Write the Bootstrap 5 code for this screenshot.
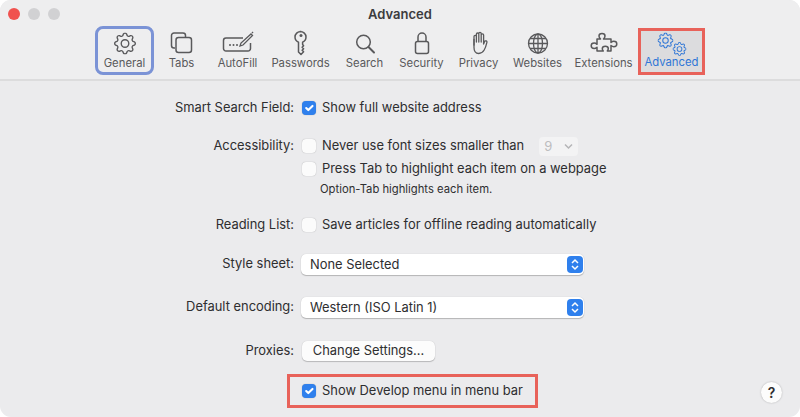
<!DOCTYPE html>
<html lang="en">
  <head>
    <meta charset="utf-8" />
    <meta name="viewport" content="width=device-width, initial-scale=1" />
    <title>Advanced</title>
    <link href="https://cdn.jsdelivr.net/npm/bootstrap@5.3.3/dist/css/bootstrap.min.css" rel="stylesheet" />
    <style>
      html, body { height: 100%; background: #fff; overflow: hidden; }
      body { font-family: Inter, "Liberation Sans", sans-serif; color: #2e2e30; font-size: 12.9px; }
      .win { height: 417px; background: #ebebed; border-radius: 11px; overflow: hidden; }
      .head { height: 81px; background: #eeeeef; border-bottom: 2px solid #dcdcdd; position: relative; }
      .lights { position: absolute; left: 8px; top: 8px; }
      .light { width: 12px; height: 12px; border-radius: 50%; background: #d1d1d3; }
      .light-red { background: #f0524f; }
      .win-title { height: 26px; padding-top: 5px; font-size: 13px; font-weight: 600; color: #3c3c3e; line-height: 18px; text-align: center; }
      .tools { padding-left: 95px; }
      .tool { height: 49px; flex: none; font-size: 11.3px; line-height: 14px; color: #59595b; text-align: center; border-radius: 8px; padding-top: 3px; }
      .tool svg { display: block; margin: 1px auto 0; height: 26px; overflow: visible; }
      .tool span { display: block; white-space: nowrap; }
      .w-general { width: 59px; border: 3px solid #7b93d6; padding-top: 0; }
      .w-tabs { width: 55px; }
      .w-autofill { width: 57px; }
      .w-passwords { width: 69px; }
      .w-search { width: 59px; }
      .w-security { width: 55px; }
      .w-privacy { width: 59px; }
      .w-websites { width: 59px; }
      .w-extensions { width: 73px; }
      .w-advanced { width: 67px; margin: 2px 0 0 -2px; height: 47px; background: #dcdcde; border: 3px solid #e8625a; border-radius: 0; color: #2f76d6; padding-top: 0; }
      .w-advanced svg { height: 23px; }
      .pane { padding-top: 16px; }
      .line { height: 22px; display: flex; align-items: center; }
      .lbl { width: 294px; margin-right: 8px; text-align: right; flex: none; }
      .chk.form-check-input { width: 14px; height: 14px; margin: 0 6px 0 0; flex: none; border: 0; border-radius: 4px; background-color: #fbfbfb; box-shadow: 0 0 1px rgba(0,0,0,.35); }
      .chk.form-check-input:checked { background-color: #2f80ed; }
      .note { height: 18px; padding-left: 320px; font-size: 11.25px; line-height: 18px; }
      .after-16 { margin-bottom: 16px; }
      .after-17 { margin-bottom: 17px; }
      .after-21 { margin-bottom: 21px; }
      .after-22 { margin-bottom: 22px; }
      .after-1 { margin-bottom: 1px; }
      .small-sel { width: 39px; height: 19px; margin-left: 15px; background: #f3f3f4; border-radius: 4px; color: #bdbdbf; padding-left: 5px; line-height: 19px; font-size: 13px; position: relative; }
      .small-sel svg { position: absolute; right: 4px; top: 6px; }
      .sel-wrap { width: 283px; margin-left: -1px; position: relative; }
      .sel-wrap .form-select { height: 21px; padding: 0 0 0 9px; font-size: 12.9px; color: #2e2e30; border: 0; border-radius: 5px; background-image: none; box-shadow: 0 1px 1px rgba(0,0,0,.22), 0 0 1px rgba(0,0,0,.2); line-height: 21px; }
      .stepper { position: absolute; right: 1px; top: 2px; width: 16px; height: 17px; border-radius: 4px; background: #2f80ed; display: flex; align-items: center; justify-content: center; }
      .btn.mac-btn { width: 133px; height: 20px; padding: 0; font-size: 12.9px; line-height: 20px; color: #2e2e30; background: #fcfcfc; border: 0; border-radius: 5px; box-shadow: 0 1px 1px rgba(0,0,0,.2), 0 0 1px rgba(0,0,0,.2); }
      .last-row { margin-top: 12px; align-items: center; }
      .dev-box { width: 251px; height: 34px; margin-left: 287px; padding-left: 12px; border: 3px solid #e8625a; display: flex; align-items: center; }
      .help { width: 21px; height: 21px; margin: 2px 18px 0 auto; padding: 0; border: 0; border-radius: 50%; background: #fcfcfc; font-size: 14px; font-weight: 600; line-height: 21px; text-align: center; color: #2e2e30; box-shadow: 0 0 2px rgba(0,0,0,.25); }
    </style>
  </head>
  <body>
    <svg width="0" height="0" class="position-absolute">
      <symbol id="gear" viewBox="0 0 16 16">
        <path fill="currentColor" d="M8 4.754a3.246 3.246 0 1 0 0 6.492 3.246 3.246 0 0 0 0-6.492zM5.754 8a2.246 2.246 0 1 1 4.492 0 2.246 2.246 0 0 1-4.492 0z"/>
        <path fill="currentColor" d="M9.796 1.343c-.527-1.79-3.065-1.79-3.592 0l-.094.319a.873.873 0 0 1-1.255.52l-.292-.16c-1.64-.892-3.433.902-2.54 2.541l.159.292a.873.873 0 0 1-.52 1.255l-.319.094c-1.79.527-1.79 3.065 0 3.592l.319.094a.873.873 0 0 1 .52 1.255l-.16.292c-.892 1.64.901 3.434 2.541 2.54l.292-.159a.873.873 0 0 1 1.255.52l.094.319c.527 1.79 3.065 1.79 3.592 0l.094-.319a.873.873 0 0 1 1.255-.52l.292.16c1.64.893 3.434-.902 2.54-2.541l-.159-.292a.873.873 0 0 1 .52-1.255l.319-.094c1.79-.527 1.79-3.065 0-3.592l-.319-.094a.873.873 0 0 1-.52-1.255l.16-.292c.893-1.64-.902-3.433-2.541-2.54l-.292.159a.873.873 0 0 1-1.255-.52l-.094-.319zm-2.633.283c.246-.835 1.428-.835 1.674 0l.094.319a1.873 1.873 0 0 0 2.693 1.115l.291-.16c.764-.415 1.6.42 1.184 1.185l-.159.292a1.873 1.873 0 0 0 1.116 2.692l.318.094c.835.246.835 1.428 0 1.674l-.319.094a1.873 1.873 0 0 0-1.115 2.693l.16.291c.415.764-.42 1.6-1.185 1.184l-.291-.159a1.873 1.873 0 0 0-2.693 1.116l-.094.318c-.246.835-1.428.835-1.674 0l-.094-.319a1.873 1.873 0 0 0-2.692-1.115l-.292.16c-.764.415-1.6-.42-1.184-1.185l.159-.291A1.873 1.873 0 0 0 1.945 8.93l-.319-.094c-.835-.246-.835-1.428 0-1.674l.319-.094A1.873 1.873 0 0 0 3.06 4.377l-.16-.292c-.415-.764.42-1.6 1.185-1.184l.292.159a1.873 1.873 0 0 0 2.692-1.115l.094-.319z"/>
      </symbol>
    </svg>
    <div class="win">
      <div class="head">
        <div class="lights d-flex gap-2">
          <div class="light light-red"></div>
          <div class="light"></div>
          <div class="light"></div>
        </div>
        <div class="win-title">Advanced</div>
        <div class="tools d-flex">
          <div class="tool w-general">
            <svg width="26" height="26" viewBox="0 0 26 26"><use href="#gear" x="2" y="2.500" width="22" height="22"/></svg>
            <span>General</span>
          </div>
          <div class="tool w-tabs">
            <svg width="26" height="26" viewBox="0 0 26 26" fill="none" stroke="currentColor" stroke-width="1.500"><path d="M6 18H5a2.500 2.500 0 0 1-2.500-2.500V5.500A2.500 2.500 0 0 1 5 3h9a2.500 2.500 0 0 1 2.500 2.500V7"/><rect x="7" y="7.500" width="15.500" height="15" rx="2.500"/></svg>
            <span>Tabs</span>
          </div>
          <div class="tool w-autofill">
            <svg width="32" height="26" viewBox="0 0 32 26" fill="none" stroke="currentColor" stroke-width="1.500"><path d="M21 8H4a2.500 2.500 0 0 0-2.500 2.500v8A2.500 2.500 0 0 0 4 21h22a2.500 2.500 0 0 0 2.500-2.500V13"/><path d="M18 16l1-3L29 4l1.500 1.500L21 15z" stroke-width="1.300"/><path d="M30 3l1-1"/><circle cx="8" cy="15" r="1" fill="currentColor" stroke="none"/><circle cx="11.500" cy="15" r="1" fill="currentColor" stroke="none"/><circle cx="15" cy="15" r="1" fill="currentColor" stroke="none"/></svg>
            <span>AutoFill</span>
          </div>
          <div class="tool w-passwords">
            <svg width="16" height="26" viewBox="0 0 16 26" fill="none" stroke="currentColor" stroke-width="1.500"><path d="M8 1.500c-3.500 0-6 2.500-6 5.600 0 2.500 1.500 4.300 3.500 5.200V22l2.500 2.500 2.600-2.700-1.500-1.600 1.500-1.500-1.500-1.500 1.500-1.500-1-1.200 0-2.200c2-.9 3.400-2.700 3.400-5.200 0-3.100-2.500-5.600-6-5.600z" stroke-linejoin="round"/><circle cx="8" cy="5.500" r="1.500" fill="currentColor" stroke="none"/></svg>
            <span>Passwords</span>
          </div>
          <div class="tool w-search">
            <svg width="22" height="26" viewBox="0 0 22 26" fill="none" stroke="currentColor" stroke-width="1.500"><circle cx="9.500" cy="12" r="6.800"/><path d="M14.500 17l5.500 5.500" stroke-width="2" stroke-linecap="round"/></svg>
            <span>Search</span>
          </div>
          <div class="tool w-security">
            <svg width="16" height="26" viewBox="0 0 16 26" fill="none" stroke="currentColor" stroke-width="1.500"><rect x="1.500" y="11.500" width="13" height="12" rx="2"/><path d="M4 11.500V7a4 4 0 0 1 8 0v4.500"/></svg>
            <span>Security</span>
          </div>
          <div class="tool w-privacy">
            <svg width="20" height="26" viewBox="0 0 20 26" fill="none" stroke="currentColor" stroke-width="1.300" stroke-linecap="round" stroke-linejoin="round"><path d="M5 15V6.500a1.200 1.200 0 0 1 2.400 0V12M7.400 12V4.200a1.200 1.200 0 0 1 2.400 0V12M9.800 12V3.500a1.200 1.200 0 0 1 2.400 0V12M12.200 12V5a1.200 1.200 0 0 1 2.400 0v9l1-2.400a1.200 1.200 0 0 1 2.300.8c-.7 3-1.400 5.500-2.700 7.600-1.200 2-3 3.500-5.500 3.500C6.500 23.500 5 21 5 17.500V15"/><path d="M5 9.500V15"/></svg>
            <span>Privacy</span>
          </div>
          <div class="tool w-websites">
            <svg width="22" height="26" viewBox="0 0 22 26" fill="none" stroke="currentColor" stroke-width="1.300"><circle cx="11" cy="13.500" r="9.500"/><ellipse cx="11" cy="13.500" rx="4.500" ry="9.500"/><path d="M11 4v19M1.500 13.500h19M3 8.500h16M3 18.500h16"/></svg>
            <span>Websites</span>
          </div>
          <div class="tool w-extensions">
            <svg width="30" height="26" viewBox="0 0 30 26" fill="none" stroke="currentColor" stroke-width="1.500" stroke-linejoin="round"><path d="M8 9h3.500c-1-1-1.500-2-1.500-3 0-1.500 1.300-2.500 3-2.500s3 1 3 2.500c0 1-.5 2-1.500 3H22v3.500c1-.8 1.800-1.200 2.800-1.200 1.700 0 3 1.200 3 2.700s-1.300 2.700-3 2.700c-1 0-1.800-.4-2.800-1.200V21h-3.700c.6-.8 1-1.500 1-2.300 0-1.500-1.300-2.500-3-2.500s-3 1-3 2.500c0 .8.300 1.500 1 2.300H8v-3.700c-1 .8-1.800 1.200-2.800 1.200-1.700 0-3-1.200-3-2.700s1.300-2.700 3-2.700c1 0 1.800.4 2.800 1.200z"/></svg>
            <span>Extensions</span>
          </div>
          <div class="tool w-advanced">
            <svg width="38" height="23" viewBox="0 0 38 23"><use href="#gear" x="4.500" y="0.500" width="16" height="16"/><use href="#gear" x="19.500" y="10" width="14" height="14"/></svg>
            <span>Advanced</span>
          </div>
        </div>
      </div>

      <div class="pane">
        <div class="line after-16">
          <div class="lbl">Smart Search Field:</div>
          <input class="form-check-input chk" type="checkbox" checked />
          <span>Show full website address</span>
        </div>
        <div class="line after-1">
          <div class="lbl">Accessibility:</div>
          <input class="form-check-input chk" type="checkbox" />
          <span>Never use font sizes smaller than</span>
          <div class="small-sel">9
            <svg width="11" height="7" viewBox="0 0 11 7" fill="none" stroke="#b5b5b7" stroke-width="1.500"><path d="M2 1.500l3.500 3.500L9 1.500"/></svg>
          </div>
        </div>
        <div class="line">
          <div class="lbl"></div>
          <input class="form-check-input chk" type="checkbox" />
          <span>Press Tab to highlight each item on a webpage</span>
        </div>
        <div class="note after-16">Option-Tab highlights each item.</div>
        <div class="line after-17">
          <div class="lbl">Reading List:</div>
          <input class="form-check-input chk" type="checkbox" />
          <span>Save articles for offline reading automatically</span>
        </div>
        <div class="line after-21">
          <div class="lbl">Style sheet:</div>
          <div class="sel-wrap">
            <select class="form-select"><option>None Selected</option></select>
            <div class="stepper"><svg width="10" height="13" viewBox="0 0 10 13" fill="none" stroke="#fff" stroke-width="1.500"><path d="M2 5l3-3 3 3M2 8l3 3 3-3"/></svg></div>
          </div>
        </div>
        <div class="line after-22">
          <div class="lbl">Default encoding:</div>
          <div class="sel-wrap">
            <select class="form-select"><option>Western (ISO Latin 1)</option></select>
            <div class="stepper"><svg width="10" height="13" viewBox="0 0 10 13" fill="none" stroke="#fff" stroke-width="1.500"><path d="M2 5l3-3 3 3M2 8l3 3 3-3"/></svg></div>
          </div>
        </div>
        <div class="line">
          <div class="lbl">Proxies:</div>
          <button class="btn mac-btn" type="button">Change Settings...</button>
        </div>
        <div class="d-flex last-row">
          <div class="dev-box">
            <input class="form-check-input chk" type="checkbox" checked />
            <span>Show Develop menu in menu bar</span>
          </div>
          <button class="help" type="button">?</button>
        </div>
      </div>
    </div>
    <script src="https://cdn.jsdelivr.net/npm/bootstrap@5.3.3/dist/js/bootstrap.bundle.min.js"></script>
  </body>
</html>
